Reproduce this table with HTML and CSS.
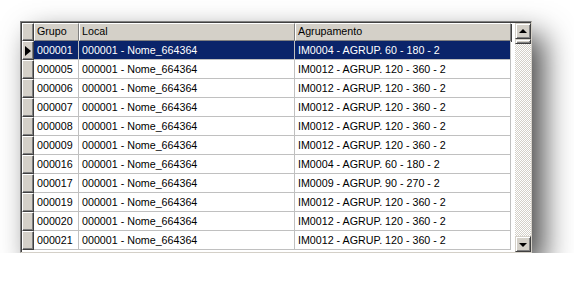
FILE: index.html
```html
<!DOCTYPE html>
<html>
<head>
<meta charset="utf-8">
<link rel="stylesheet" href="styles.css">
</head>
<body>
<div class="win">
  <div class="grid">
    <div class="rows">
      <div class="row head">
        <div class="ind"></div>
        <div class="cell hc">Grupo</div>
        <div class="cell hc">Local</div>
        <div class="cell hc">Agrupamento</div>
      </div>
      <div class="row sel">
        <div class="ind"><span class="arrow"></span></div>
        <div class="cell">000001</div>
        <div class="cell">000001 - Nome_664364</div>
        <div class="cell">IM0004 - AGRUP. 60 - 180 - 2</div>
      </div>
      <div class="row"><div class="ind"></div><div class="cell">000005</div><div class="cell">000001 - Nome_664364</div><div class="cell">IM0012 - AGRUP. 120 - 360 - 2</div></div>
      <div class="row"><div class="ind"></div><div class="cell">000006</div><div class="cell">000001 - Nome_664364</div><div class="cell">IM0012 - AGRUP. 120 - 360 - 2</div></div>
      <div class="row"><div class="ind"></div><div class="cell">000007</div><div class="cell">000001 - Nome_664364</div><div class="cell">IM0012 - AGRUP. 120 - 360 - 2</div></div>
      <div class="row"><div class="ind"></div><div class="cell">000008</div><div class="cell">000001 - Nome_664364</div><div class="cell">IM0012 - AGRUP. 120 - 360 - 2</div></div>
      <div class="row"><div class="ind"></div><div class="cell">000009</div><div class="cell">000001 - Nome_664364</div><div class="cell">IM0012 - AGRUP. 120 - 360 - 2</div></div>
      <div class="row"><div class="ind"></div><div class="cell">000016</div><div class="cell">000001 - Nome_664364</div><div class="cell">IM0004 - AGRUP. 60 - 180 - 2</div></div>
      <div class="row"><div class="ind"></div><div class="cell">000017</div><div class="cell">000001 - Nome_664364</div><div class="cell">IM0009 - AGRUP. 90 - 270 - 2</div></div>
      <div class="row"><div class="ind"></div><div class="cell">000019</div><div class="cell">000001 - Nome_664364</div><div class="cell">IM0012 - AGRUP. 120 - 360 - 2</div></div>
      <div class="row"><div class="ind"></div><div class="cell">000020</div><div class="cell">000001 - Nome_664364</div><div class="cell">IM0012 - AGRUP. 120 - 360 - 2</div></div>
      <div class="row"><div class="ind"></div><div class="cell">000021</div><div class="cell">000001 - Nome_664364</div><div class="cell">IM0012 - AGRUP. 120 - 360 - 2</div></div>
    </div>
    <div class="vscroll">
      <div class="btn"><span class="up"></span></div>
      <div class="thumb"></div>
      <div class="track"></div>
      <div class="btn"><span class="down"></span></div>
    </div>
  </div>
</div>
</body>
</html>
```
FILE: styles.css
```css
html, body {
  margin: 0;
  padding: 0;
  background: #ffffff;
}
body {
  font-family: "Liberation Sans", Arial, sans-serif;
  font-size: 10.7px;
  color: #000;
}
.win {
  margin: 21px 0 0 20px;
  width: 512px;
  height: 232px;
  box-sizing: border-box;
  border-top: 1px solid #808080;
  border-left: 1px solid #808080;
  border-right: 1px solid #d4d0c8;
  border-bottom: 1px solid #d4d0c8;
  box-shadow: 12px 14px 28px rgba(0, 0, 0, 0.7);
  background: #ffffff;
}
.grid {
  display: flex;
  height: 100%;
  box-sizing: border-box;
  border-top: 1px solid #404040;
  border-left: 1px solid #404040;
  overflow: hidden;
}
.rows {
  flex: 1;
  display: flex;
  flex-direction: column;
  overflow: hidden;
}
.row {
  display: grid;
  grid-template-columns: 12px 45px 216px 216px;
  height: 19px;
  flex: none;
}
.row.head {
  height: 18px;
}
.cell {
  box-sizing: border-box;
  border-right: 1px solid #c0c0c0;
  border-bottom: 1px solid #c0c0c0;
  padding: 0 0 0 3px;
  line-height: 18px;
  white-space: nowrap;
  overflow: hidden;
}
.head .cell.hc {
  background: #d4d0c8;
  border-top: 1px solid #ffffff;
  border-left: 1px solid #ffffff;
  border-right: 1px solid #808080;
  border-bottom: 1px solid #808080;
  line-height: 15px;
  padding-left: 2px;
  box-shadow: inset -1px -1px 0 #d4d0c8, 1px 1px 0 #404040;
}
.ind {
  box-sizing: border-box;
  background: #d4d0c8;
  border-top: 1px solid #ffffff;
  border-left: 1px solid #ffffff;
  border-right: 1px solid #404040;
  border-bottom: 1px solid #404040;
  box-shadow: inset -1px -1px 0 #808080;
  display: flex;
  align-items: center;
  justify-content: center;
}
.sel .cell {
  background: #0a246a;
  color: #ffffff;
  border-right-color: #c0c0c0;
  border-bottom-color: #c0c0c0;
}
.arrow {
  width: 0;
  height: 0;
  border-top: 5px solid transparent;
  border-bottom: 5px solid transparent;
  border-left: 6px solid #000;
  margin-left: -1px;
}
.vscroll {
  width: 16px;
  margin-left: 1px;
  display: flex;
  flex-direction: column;
  background-color: #ffffff;
  background-image: repeating-conic-gradient(#d4d0c8 0 25%, #ffffff 0 50%);
  background-size: 2px 2px;
}
.btn, .thumb {
  box-sizing: border-box;
  background: #d4d0c8;
  border-top: 1px solid #d4d0c8;
  border-left: 1px solid #d4d0c8;
  border-right: 1px solid #404040;
  border-bottom: 1px solid #404040;
  box-shadow: inset 1px 1px 0 #ffffff, inset -1px -1px 0 #808080;
  flex: none;
}
.btn {
  height: 16px;
  display: flex;
  align-items: center;
  justify-content: center;
}
.thumb {
  height: 5px;
}
.track {
  flex: 1;
}
.up, .down {
  width: 0;
  height: 0;
  border-left: 4px solid transparent;
  border-right: 4px solid transparent;
}
.up {
  border-bottom: 4px solid #000;
  margin-top: -1px;
}
.down {
  border-top: 4px solid #000;
  margin-top: 1px;
}
```
